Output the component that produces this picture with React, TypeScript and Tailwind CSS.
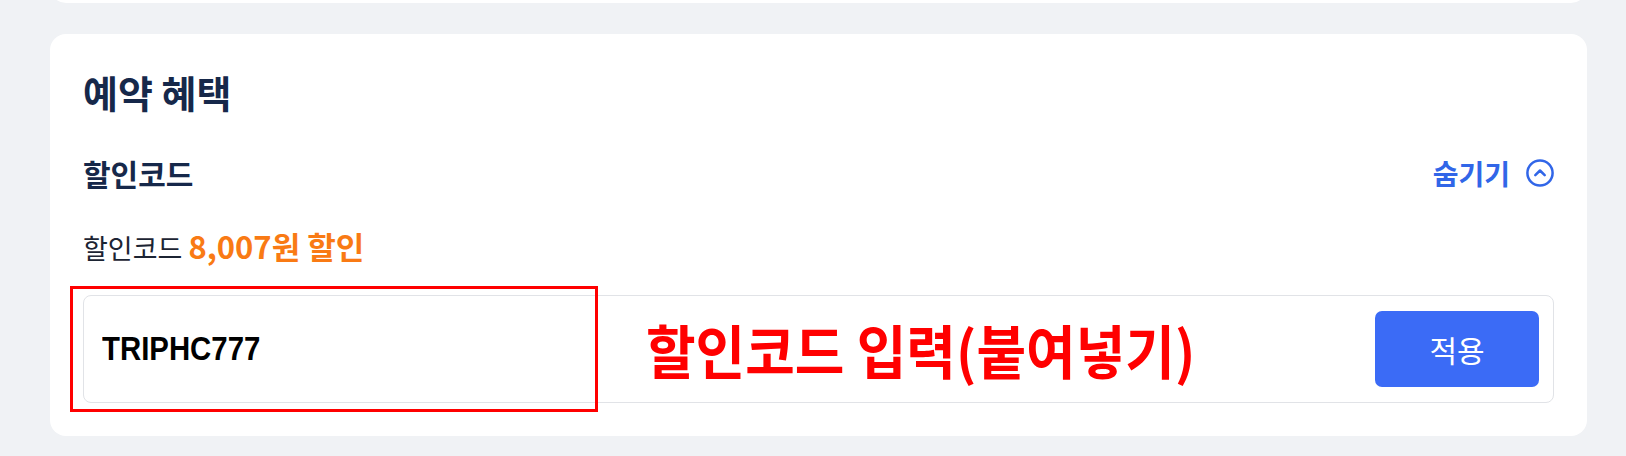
import { useState } from "react";

const kr = "font-['Noto_Sans_CJK_KR','Noto_Sans',sans-serif]";

function ChevronCircle() {
  return (
    <svg width="28" height="28" viewBox="0 0 28 28" fill="none" className="shrink-0">
      <circle cx="14" cy="14" r="12.6" stroke="#3166E8" strokeWidth="2.5" />
      <polyline
        points="9.3,16.2 14,11.5 18.7,16.2"
        stroke="#3166E8"
        strokeWidth="2.5"
        strokeLinecap="round"
        strokeLinejoin="round"
      />
    </svg>
  );
}

export default function App() {
  const [code, setCode] = useState("TRIPHC777");
  const [open, setOpen] = useState(true);

  return (
    <div className={`min-h-screen bg-[#F0F2F5] pl-[50px] pr-[39px] ${kr}`}>
      {/* bottom edge of the previous card */}
      <div className="flex h-[3px] items-end overflow-hidden">
        <div className="h-[40px] w-full shrink-0 rounded-b-[16px] bg-white" />
      </div>

      <section className="mt-[31px] rounded-[16px] bg-white px-[33px] pb-[33px] pt-[39px]">
        <h2 className="text-[38px] font-bold leading-[38px] text-[#16284A]">예약 혜택</h2>

        <div className="mt-[47px] flex items-center justify-between">
          <h3 className="text-[30px] font-bold leading-[30px] text-[#16284A]">할인코드</h3>
          <button
            type="button"
            onClick={() => setOpen(!open)}
            className="flex items-center gap-[16px] text-[28px] font-bold leading-[28px] text-[#3166E8]"
          >
            숨기기
            <ChevronCircle />
          </button>
        </div>

        <p className="mt-[43px] text-[27px] leading-[30px] text-[#1C2433]">
          할인코드 <span className="text-[31px] font-bold text-[#F97A14]">8,007원 할인</span>
        </p>

        <div className="relative mt-[32px] flex items-center rounded-[8px] border border-[#E1E3E7] py-[15px] pl-[18px] pr-[14px]">
          <input
            value={code}
            onChange={(e) => setCode(e.target.value)}
            className="w-[300px] origin-left scale-x-[0.89] bg-transparent font-['Liberation_Sans',sans-serif] text-[33px] font-bold text-black outline-none"
          />
          <button
            type="button"
            className="ml-auto flex h-[76px] w-[164px] items-center justify-center rounded-[7px] bg-[#3B6BF6] text-[30px] leading-none text-white"
          >
            적용
          </button>

          {/* annotation overlay */}
          <div className="pointer-events-none absolute left-[-14px] top-[-10px] h-[126px] w-[528px] border-[3px] border-[#FF0000]" />
          <span className="pointer-events-none absolute left-[562px] top-1/2 -translate-y-1/2 origin-left scale-x-[0.93] whitespace-nowrap text-[58px] font-bold leading-none text-[#FF0000]">
            할인코드 입력(붙여넣기)
          </span>
        </div>
      </section>
    </div>
  );
}
